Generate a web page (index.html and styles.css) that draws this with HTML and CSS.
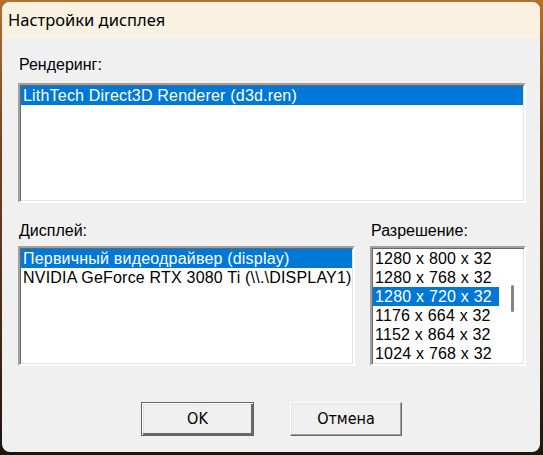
FILE: index.html
```html
<!DOCTYPE html>
<html>
<head>
<meta charset="utf-8">
<link rel="stylesheet" href="styles.css">
</head>
<body>
<div class="window">
  <div class="titlebar">Настройки дисплея</div>
  <div class="content">
    <div class="label">Рендеринг:</div>
    <div class="listbox render">
      <div class="item sel">LithTech Direct3D Renderer (d3d.ren)</div>
    </div>
    <div class="row">
      <div class="col display">
        <div class="label">Дисплей:</div>
        <div class="listbox disp">
          <div class="item sel">Первичный видеодрайвер (display)</div>
          <div class="item">NVIDIA GeForce RTX 3080 Ti (\\.\DISPLAY1)</div>
        </div>
      </div>
      <div class="col res">
        <div class="label">Разрешение:</div>
        <div class="listbox resbox">
          <div class="items">
            <div class="item">1280 x 800 x 32</div>
            <div class="item">1280 x 768 x 32</div>
            <div class="item sel">1280 x 720 x 32</div>
            <div class="item">1176 x 664 x 32</div>
            <div class="item">1152 x 864 x 32</div>
            <div class="item">1024 x 768 x 32</div>
          </div>
          <div class="scroll"><div class="thumb"></div></div>
        </div>
      </div>
    </div>
    <div class="buttons">
      <div class="btn default">OK</div>
      <div class="btn">Отмена</div>
    </div>
  </div>
</div>
</body>
</html>
```
FILE: styles.css
```css
html, body {
  margin: 0;
  padding: 0;
}
body {
  width: 543px;
  height: 455px;
  overflow: hidden;
  background: linear-gradient(180deg, #b5702f 0%, #7a4420 30%, #4a2a16 70%, #1e1510 100%);
  font-family: "Liberation Sans", Arial, sans-serif;
}
.window {
  margin: 2px 0 0 2px;
  width: 538px;
  height: 450px;
  border-radius: 8px;
  overflow: hidden;
  background: #f0f0f0;
  display: flex;
  flex-direction: column;
}
.titlebar {
  height: 37px;
  flex: none;
  background: #f9f2e2;
  font-family: "Noto Sans", "Open Sans", sans-serif;
  font-size: 16.5px;
  color: #000;
  line-height: 36px;
  padding-left: 6px;
}
.content {
  flex: 1;
  padding: 17px 0 0 16px;
  display: flex;
  flex-direction: column;
}
.label {
  font-size: 16px;
  line-height: 18px;
  height: 18px;
  color: #000;
  margin-left: 1px;
}
.listbox {
  background: #fff;
  border-style: solid;
  border-width: 2px;
  border-color: #a0a0a0 #ffffff #ffffff #a0a0a0;
  box-shadow: inset 1px 1px 0 #696969, inset -1px -1px 0 #e3e3e3;
  padding: 1px 1px 0 1px;
  box-sizing: border-box;
  overflow: hidden;
}
.render {
  margin-top: 9px;
  width: 508px;
  height: 120px;
}
.item {
  font-size: 16px;
  letter-spacing: 0.2px;
  line-height: 19px;
  height: 19px;
  color: #000;
  white-space: nowrap;
  padding-left: 2px;
}
.item.sel {
  background: #0078d7;
  color: #fff;
}
.row {
  display: flex;
  margin-top: 19px;
}
.col .label {
  margin-bottom: 6px;
}
.display {
  width: 337px;
}
.res {
  margin-left: 15px;
}
.disp {
  width: 337px;
  height: 120px;
}
.resbox {
  width: 156px;
  height: 120px;
  display: flex;
}
.items {
  width: 126px;
}
.scroll {
  flex: 1;
  position: relative;
}
.thumb {
  position: absolute;
  left: 12px;
  top: 36px;
  width: 3px;
  height: 27px;
  background: #858585;
  border-radius: 1.5px;
}
.buttons {
  display: flex;
  gap: 36px;
  margin-top: 36px;
  margin-left: 123px;
}
.btn {
  width: 112px;
  height: 34px;
  box-sizing: border-box;
  border-style: solid;
  border-width: 1px;
  border-color: #fff #696969 #696969 #fff;
  box-shadow: inset -1px -1px 0 #a0a0a0, inset 1px 1px 0 #e3e3e3;
  background: #f0f0f0;
  font-family: "DejaVu Sans Condensed", "DejaVu Sans", sans-serif;
  font-size: 16px;
  line-height: 32px;
  text-align: center;
  color: #000;
}
.btn.default {
  width: 113px;
  border: 1px solid #646464;
  box-shadow: inset 1px 1px 0 #fff, inset -2px -2px 0 #696969, inset 2px 2px 0 #e3e3e3;
}
```
